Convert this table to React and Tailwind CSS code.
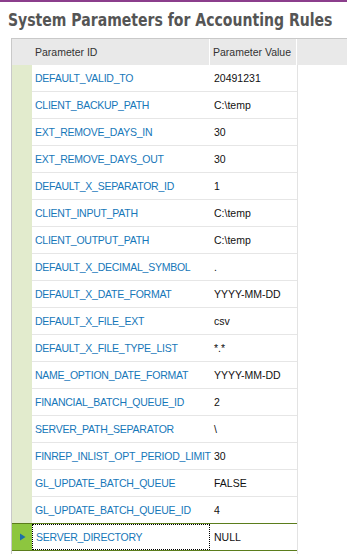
import React from "react";

const params = [
  ["DEFAULT_VALID_TO", "20491231"],
  ["CLIENT_BACKUP_PATH", "C:\\temp"],
  ["EXT_REMOVE_DAYS_IN", "30"],
  ["EXT_REMOVE_DAYS_OUT", "30"],
  ["DEFAULT_X_SEPARATOR_ID", "1"],
  ["CLIENT_INPUT_PATH", "C:\\temp"],
  ["CLIENT_OUTPUT_PATH", "C:\\temp"],
  ["DEFAULT_X_DECIMAL_SYMBOL", "."],
  ["DEFAULT_X_DATE_FORMAT", "YYYY-MM-DD"],
  ["DEFAULT_X_FILE_EXT", "csv"],
  ["DEFAULT_X_FILE_TYPE_LIST", "*.*"],
  ["NAME_OPTION_DATE_FORMAT", "YYYY-MM-DD"],
  ["FINANCIAL_BATCH_QUEUE_ID", "2"],
  ["SERVER_PATH_SEPARATOR", "\\"],
  ["FINREP_INLIST_OPT_PERIOD_LIMIT", "30"],
  ["GL_UPDATE_BATCH_QUEUE", "FALSE"],
  ["GL_UPDATE_BATCH_QUEUE_ID", "4"],
  ["SERVER_DIRECTORY", "NULL"],
];

const App = () => {
  const selected = params.length - 1;

  return (
    <div className="w-[347px] h-[554px] overflow-hidden bg-white font-['Liberation_Sans',Arial,sans-serif]">
      {/* top accent */}
      <div className="h-[2px] bg-[#8b3e8c]" />

      <div className="h-[36px] pl-[8px] pt-[6px] overflow-hidden">
        <h1 className="inline-block origin-left scale-x-[0.78] text-[18px] leading-[24px] font-bold text-[#555555] font-['DejaVu_Sans',sans-serif] whitespace-nowrap">
          System Parameters for Accounting Rules
        </h1>
      </div>

      {/* grid */}
      <div className="ml-[11px] border-l border-t border-[#c9c9c9] text-[10.5px]">
        {/* header */}
        <div className="flex h-[26px] bg-[#e9e9e9] text-[#333333]">
          <div className="w-[20px]" />
          <div className="w-[178px] flex items-center pt-[2px] pl-[3px] border-r border-white">
            Parameter ID
          </div>
          <div className="w-[87px] flex items-center pt-[2px] pl-[3px] border-r border-white">
            Parameter Value
          </div>
          <div className="flex-1" />
        </div>

        {/* rows */}
        <div className="flex">
          <div className="w-[285px]">
            {params.map(([id, value], i) => {
              const isSel = i === selected;
              const beforeSel = i === selected - 1;
              const lineCls = isSel || beforeSel ? "border-[#5b7d1c]" : "border-[#e6e6e6]";
              return (
                <div key={id} className="flex h-[27px]">
                  <div
                    className={`w-[20px] flex items-center justify-center ${
                      isSel
                        ? "bg-[#8dc63f] border-b border-[#5b7d1c]"
                        : beforeSel
                        ? "bg-[#e2ebcd] border-b border-[#5b7d1c]"
                        : "bg-[#e2ebcd]"
                    }`}
                  >
                    {isSel && (
                      <svg width="7" height="8" viewBox="0 0 7 8">
                        <path d="M1 0.5 L6.5 4 L1 7.5 Z" fill="#1d6fa8" />
                      </svg>
                    )}
                  </div>
                  <div className={`w-[178px] border-b ${lineCls} flex`}>
                    <div
                      className={`flex-1 flex items-center pt-[1px] pl-[3px] text-[#1677b9] tracking-[-0.25px] whitespace-nowrap ${
                        isSel ? "border border-dotted border-black" : ""
                      }`}
                    >
                      {id}
                    </div>
                  </div>
                  <div
                    className={`w-[87px] border-b ${lineCls} flex items-center pt-[1px] pl-[4px] text-[#111111] whitespace-nowrap`}
                  >
                    {value}
                  </div>
                </div>
              );
            })}
          </div>
          <div className="flex-1 border-l border-[#e3e3e3] h-[520px]" />
        </div>
        <div className="flex h-[10px]">
          <div className="w-[20px] bg-[#e2ebcd]" />
        </div>
      </div>
    </div>
  );
};

export default App;
